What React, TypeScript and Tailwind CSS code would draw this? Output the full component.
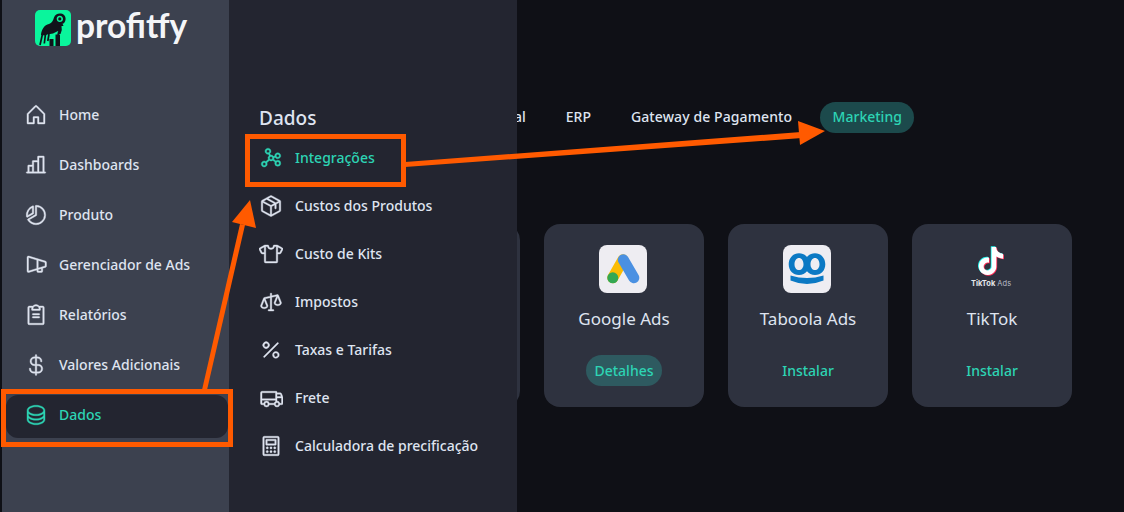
import React from 'react';
import {
  PiHouse,
  PiChartBar,
  PiChartPieSlice,
  PiMegaphoneSimple,
  PiClipboardText,
  PiCurrencyDollar,
  PiDatabase,
  PiGraph,
  PiPackage,
  PiTShirt,
  PiScales,
  PiPercent,
  PiTruck,
  PiCalculator,
} from 'react-icons/pi';

const mainNav = [
  { label: 'Home', icon: PiHouse },
  { label: 'Dashboards', icon: PiChartBar },
  { label: 'Produto', icon: PiChartPieSlice },
  { label: 'Gerenciador de Ads', icon: PiMegaphoneSimple },
  { label: 'Relatórios', icon: PiClipboardText },
  { label: 'Valores Adicionais', icon: PiCurrencyDollar },
  { label: 'Dados', icon: PiDatabase, active: true },
];

const subNav = [
  { label: 'Integrações', icon: PiGraph, active: true },
  { label: 'Custos dos Produtos', icon: PiPackage },
  { label: 'Custo de Kits', icon: PiTShirt },
  { label: 'Impostos', icon: PiScales },
  { label: 'Taxas e Tarifas', icon: PiPercent },
  { label: 'Frete', icon: PiTruck },
  { label: 'Calculadora de precificação', icon: PiCalculator },
];

const TIKTOK =
  'M12.525.02c1.31-.02 2.61-.01 3.91-.02.08 1.53.63 3.09 1.75 4.17 1.12 1.11 2.7 1.62 4.24 1.79v4.03c-1.44-.05-2.89-.35-4.2-.97-.57-.26-1.1-.59-1.62-.93-.01 2.92.01 5.84-.02 8.75-.08 1.4-.54 2.79-1.35 3.94-1.31 1.92-3.58 3.17-5.91 3.21-1.43.08-2.86-.31-4.08-1.03-2.02-1.19-3.44-3.37-3.65-5.71-.02-.5-.03-1-.01-1.49.18-1.9 1.12-3.72 2.58-4.96 1.66-1.44 3.98-2.13 6.15-1.72.02 1.48-.04 2.96-.04 4.44-.99-.32-2.15-.23-3.02.37-.63.41-1.11 1.04-1.36 1.75-.21.51-.15 1.07-.14 1.61.24 1.64 1.82 3.02 3.5 2.87 1.12-.01 2.19-.66 2.77-1.61.19-.33.4-.67.41-1.06.1-1.79.06-3.57.07-5.36.01-4.03-.01-8.05.02-12.07z';

const RamLogo = () => (
  <svg width="36" height="36" viewBox="0 0 36 36" className="shrink-0">
    <rect width="36" height="36" rx="5" fill="#0af59c" />
    <path
      fillRule="evenodd"
      fill="#10131a"
      d="M6 25C6.500 19 9.500 15 14 14 17 13.300 18 10.500 19 7.500 20 4.500 23 3 26 3.500 29.200 4 31.200 7 30.500 10 30 12.300 28.800 13.500 27.500 13.800L28.500 16 26.500 16 26.800 20 25.500 24 23.500 24 23 21 18 23.500 15 24 12 24.500 10.500 25.500 6 25ZM24.800 5.800C22.800 5.800 21.600 7.300 21.700 9 21.800 10.800 23.200 12 24.800 12 26.500 12 28 10.600 28 8.900 28 7.200 26.600 5.800 24.800 5.800Z"
    />
    <circle cx="24.800" cy="8.900" r="1.600" fill="#10131a" />
    <path d="M7.500 24 5 35M10.500 24 9.300 33.500M14 24 12.800 31M23.700 22 23 25" stroke="#10131a" strokeWidth="1.700" fill="none" />
    <rect x="14.500" y="29" width="4" height="7" fill="#10131a" />
    <rect x="20.500" y="24.500" width="4.500" height="11.500" fill="#10131a" />
  </svg>
);

const GoogleAdsLogo = () => (
  <svg width="48" height="48" viewBox="0 0 48 48">
    <line x1="24" y1="14.800" x2="13.800" y2="32.800" stroke="#fbbc04" strokeWidth="11" strokeLinecap="round" />
    <line x1="24.300" y1="14.800" x2="34.800" y2="32.800" stroke="#4a90e2" strokeWidth="11" strokeLinecap="round" />
    <circle cx="13.800" cy="32.800" r="5.500" fill="#34a853" />
  </svg>
);

const TaboolaLogo = () => (
  <svg width="48" height="48" viewBox="0 0 48 48">
    <path
      fillRule="evenodd"
      fill="#0b79c4"
      d="M5.700 19.300C5.700 13 10 8.300 16 8.300c3.300 0 6.200 1.400 8 3.700 1.800-2.300 4.700-3.700 8-3.700 6 0 10.300 4.700 10.300 11s-4.300 10.700-10.300 10.700c-3.300 0-6.200-1.400-8-3.700-1.800 2.300-4.700 3.700-8 3.700-6 0-10.300-4.400-10.300-10.700zM16 13c-2.500 0-4.500 2.700-4.500 6.200s2 5.800 4.500 5.800 4.500-2.300 4.500-5.800S18.500 13 16 13zm16 0c-2.500 0-4.500 2.700-4.500 6.200s2 5.800 4.500 5.800 4.500-2.300 4.500-5.800S34.500 13 32 13z"
    />
    <path d="M7.500 30.500Q24 35.500 40.500 30.500L40.500 35.500Q24 42.500 7.500 35.500Z" fill="#0b79c4" />
  </svg>
);

const TikTokLogo = () => (
  <div className="w-12 h-12 flex flex-col items-center justify-start pt-[2px]">
    <svg width="28" height="28" viewBox="0 0 24 24" className="overflow-visible">
      <path d={TIKTOK} fill="#25f4ee" transform="translate(-0.700 -0.600)" />
      <path d={TIKTOK} fill="#fe2c55" transform="translate(0.700 0.600)" />
      <path d={TIKTOK} fill="#ffffff" />
    </svg>
    <div className="mt-[4px] whitespace-nowrap text-[7.5px] leading-[9px] text-[#e5e7eb] font-['Inter',sans-serif]">
      <span className="font-bold">TikTok</span> <span className="text-[#b8bcc6]">Ads</span>
    </div>
  </div>
);

const cards = [
  { name: 'Google Ads', action: 'Detalhes', installed: true, logo: <GoogleAdsLogo />, tile: true },
  { name: 'Taboola Ads', action: 'Instalar', logo: <TaboolaLogo />, tile: true },
  { name: 'TikTok', action: 'Instalar', logo: <TikTokLogo /> },
];

export default function App() {
  return (
    <div className="relative w-[1124px] h-[512px] overflow-hidden bg-[#0f1016] pl-[2px] flex font-['Noto_Sans',sans-serif] text-[#dfe4f0]">
      <aside className="w-[227px] shrink-0 bg-[#3c414f] flex flex-col">
        <div className="flex items-center gap-[5px] pl-[33px] pt-[10px] h-[46px]">
          <RamLogo />
          <span className="font-['Lato',sans-serif] font-bold text-[33.500px] leading-[36px] text-[#f4f5f8] -mt-[6px]">
            profitfy
          </span>
        </div>
        <nav className="mt-[49px] flex flex-col gap-[7px] pl-[4px] pr-px">
          {mainNav.map(({ label, icon: Icon, active }) => (
            <div
              key={label}
              className={`h-[43px] flex items-center gap-[11px] pl-[18px] pb-[3px] rounded-xl text-[14px] font-medium ${
                active ? 'bg-[#232530] text-[#2dd4b4]' : ''
              }`}
            >
              <Icon size={24} stroke="currentColor" strokeWidth={4} className="shrink-0" />
              <span className="-mt-[2px]">{label}</span>
            </div>
          ))}
        </nav>
      </aside>

      <section className="w-[288px] shrink-0 bg-[#232530] pl-[30px] pt-[106px]">
        <h2 className="text-[19px] leading-6 font-medium">Dados</h2>
        <div className="mt-1 flex flex-col">
          {subNav.map(({ label, icon: Icon, active }) => (
            <div
              key={label}
              className={`h-12 flex items-center gap-[12px] text-[14px] font-medium ${active ? 'text-[#2dd4b4]' : ''}`}
            >
              <Icon size={24} stroke="currentColor" strokeWidth={4} className="shrink-0" />
              <span className="-mt-[2px]">{label}</span>
            </div>
          ))}
        </div>
      </section>

      <main className="flex-1 min-w-0 overflow-hidden pt-[102px]">
        <div className="flex items-center gap-4 h-[31px] text-[14px] font-medium">
          <span className="-ml-[3px] pr-3 pb-[2px]">al</span>
          <span className="px-3 pb-[2px]">ERP</span>
          <span className="px-3 pb-[2px] whitespace-nowrap tracking-[0.1px]">Gateway de Pagamento</span>
          <span className="h-[31px] w-[94px] flex items-center justify-center pb-[2px] rounded-full bg-[#1c4a4c] text-[#2dd4b4]">
            Marketing
          </span>
        </div>
        <div className="mt-[91px] -ml-[157px] flex gap-6">
          <div className="w-40 h-[183px] shrink-0 rounded-2xl bg-[#2e323f]" />
          {cards.map((card) => (
            <div key={card.name} className="w-40 h-[183px] shrink-0 rounded-2xl bg-[#2e323f] flex flex-col items-center pt-[21px]">
              <div
                className={`w-12 h-12 mr-[2px] rounded-lg flex items-center justify-center ${card.tile ? 'bg-[#eeedf2]' : ''}`}
              >
                {card.logo}
              </div>
              <div className="mt-[14px] text-[17px] leading-6 font-normal">{card.name}</div>
              <div
                className={`mt-[24px] h-[31px] px-2 flex items-center rounded-full text-[14px] font-medium text-[#2dd4b4] ${
                  card.installed ? 'bg-[#2e5a60]' : ''
                }`}
              >
                {card.action}
              </div>
            </div>
          ))}
        </div>
      </main>

      <div className="absolute left-px top-[389px] w-[232px] h-[58px] border-[5px] border-[#ff5a00]" />
      <div className="absolute left-[245px] top-[134px] w-[161px] h-[53px] border-[5px] border-[#ff5a00]" />
      <svg className="absolute inset-0 pointer-events-none" width="1124" height="512" viewBox="0 0 1124 512">
        <polygon points="202,390 207,390 245,225 240,224" fill="#ff5a00" />
        <polygon points="250,200 232,222 256,228" fill="#ff5a00" />
        <polygon points="405,162 405,167 802,138 801,132" fill="#ff5a00" />
        <polygon points="825,131 798,121 800,145" fill="#ff5a00" />
      </svg>
    </div>
  );
}
